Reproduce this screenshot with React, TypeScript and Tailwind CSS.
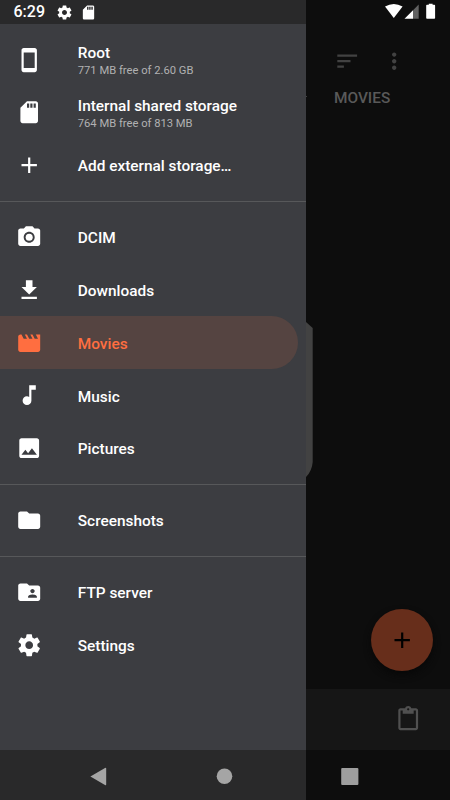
import React from "react";
import type { IconType } from "react-icons";
import {
  MdAdd,
  MdContentPaste,
  MdFileDownload,
  MdFolder,
  MdFolderShared,
  MdImage,
  MdMoreVert,
  MdMusicNote,
  MdPhotoCamera,
  MdSdStorage,
  MdSort,
  MdStayCurrentPortrait,
} from "react-icons/md";

type IconProps = { className?: string };
type Item = { icon: IconType | React.FC<IconProps>; label: string; detail?: string; active?: boolean };

function Gear({ className }: IconProps) {
  return (
    <svg viewBox="0 0 24 24" fill="currentColor" className={className}>
      <path d="M19.43 12.98c.04-.32.07-.64.07-.98s-.03-.66-.07-.98l2.11-1.65c.19-.15.24-.42.12-.64l-2-3.46c-.12-.22-.39-.3-.61-.22l-2.49 1c-.52-.4-1.08-.73-1.69-.98l-.38-2.65C14.46 2.18 14.25 2 14 2h-4c-.25 0-.46.18-.49.42l-.38 2.65c-.61.25-1.17.59-1.69.98l-2.49-1c-.23-.09-.49 0-.61.22l-2 3.46c-.13.22-.07.49.12.64l2.11 1.65c-.04.32-.07.65-.07.98s.03.66.07.98l-2.11 1.65c-.19.15-.24.42-.12.64l2 3.46c.12.22.39.3.61.22l2.49-1c.52.4 1.08.73 1.69.98l.38 2.65c.03.24.24.42.49.42h4c.25 0 .46-.18.49-.42l.38-2.65c.61-.25 1.17-.59 1.69-.98l2.49 1c.23.09.49 0 .61-.22l2-3.46c.12-.22.07-.49-.12-.64l-2.11-1.65zM12 15.5c-1.93 0-3.5-1.57-3.5-3.5s1.57-3.5 3.5-3.5 3.5 1.57 3.5 3.5-1.57 3.5-3.5 3.5z" />
    </svg>
  );
}

function Clapper({ className }: IconProps) {
  return (
    <svg viewBox="0 0 24 24" fill="currentColor" className={className}>
      <path d="M18 4l2 4h-3l-2-4h-2l2 4h-3l-2-4H8l2 4H7L5 4H4c-1.1 0-1.99.9-1.99 2L2 18c0 1.1.9 2 2 2h16c1.1 0 2-.9 2-2V4h-4z" />
    </svg>
  );
}

const groups: Item[][] = [
  [
    { icon: MdStayCurrentPortrait, label: "Root", detail: "771 MB free of 2.60 GB" },
    { icon: MdSdStorage, label: "Internal shared storage", detail: "764 MB free of 813 MB" },
    { icon: MdAdd, label: "Add external storage…" },
  ],
  [
    { icon: MdPhotoCamera, label: "DCIM" },
    { icon: MdFileDownload, label: "Downloads" },
    { icon: Clapper, label: "Movies", active: true },
    { icon: MdMusicNote, label: "Music" },
    { icon: MdImage, label: "Pictures" },
  ],
  [{ icon: MdFolder, label: "Screenshots" }],
  [
    { icon: MdFolderShared, label: "FTP server" },
    { icon: Gear, label: "Settings" },
  ],
];

function Row({ icon: Icon, label, detail, active }: Item) {
  return (
    <li
      className={`mr-[8.5px] flex h-[52.8px] items-center rounded-r-full pl-4 ${
        active ? "bg-[#554441] text-[#ff6e40]" : "text-white"
      }`}
    >
      <Icon className="size-[26.4px] shrink-0" />
      <div className="ml-[35.4px] whitespace-nowrap pt-[2.2px]">
        <div className={`text-[15.4px] font-medium ${detail ? "leading-[19px]" : "leading-[22px]"}`}>{label}</div>
        {detail && <div className="text-[11.2px] leading-[15px] text-[#b1b1b2]">{detail}</div>}
      </div>
    </li>
  );
}

function StatusBar() {
  return (
    <header className="flex h-6 shrink-0 text-white">
      <div className="flex w-[306px] items-center bg-[#29292a] pl-[13.5px]">
        <span className="w-[42.5px] text-[16px] font-medium leading-6">6:29</span>
        <Gear className="size-[17px]" />
        <MdSdStorage className="ml-[7px] size-[17px]" />
      </div>
      <svg className="h-6 flex-1" viewBox="306 0 144 24" preserveAspectRatio="none" fill="currentColor">
        <path d="M385 6.5Q393.8 1.5 402.6 6.5L393.8 18Z" />
        <path d="M404.5 18.8L413 10.2V18.8Z" />
        <path d="M413 10.2L418.7 4.5V18.8H413Z" fill="#626262" />
        <path d="M426.2 5.5Q426.2 4.7 427 4.7H428.8V3.7H432.6V4.7H434.3Q435.1 4.7 435.1 5.5V18Q435.1 18.8 434.3 18.8H427Q426.2 18.8 426.2 18Z" />
      </svg>
    </header>
  );
}

function Drawer() {
  return (
    <nav className="w-[306px] shrink-0 bg-[#3c3d41] pt-[9.4px]">
      {groups.map((group, i) => (
        <React.Fragment key={i}>
          {i > 0 && <hr className="my-[9px] h-px border-0 bg-[#57585a]" />}
          <ul>
            {group.map((item) => (
              <Row key={item.label} {...item} />
            ))}
          </ul>
        </React.Fragment>
      ))}
    </nav>
  );
}

function Content() {
  return (
    <main className="relative flex flex-1 flex-col bg-[#0d0d0d]">
      <div className="flex pl-[28px] pt-[23.5px] text-[#424242]">
        <MdSort className="size-[26.4px]" />
        <MdMoreVert className="ml-[20.4px] size-[26.4px]" />
      </div>
      <div className="pl-[28px] pt-[13.2px] text-[15.4px] font-medium leading-[22px] text-[#595959]">MOVIES</div>
      <svg className="absolute left-0 top-[298px] h-[155px] w-[8px]" viewBox="0 0 8 155">
        <path d="M0 0L6.7 6V140Q6 149 0 155Z" fill="#424242" />
      </svg>
      <span className="absolute left-0 top-[72px] h-px w-px bg-[#424242]" />
      <button
        aria-label="Add"
        className="absolute right-[16.8px] top-[585px] flex size-[62px] items-center justify-center rounded-full bg-[#672e1b] text-black shadow-[0_4px_7px_#080808]"
      >
        <MdAdd className="size-[26.4px]" />
      </button>
      <div className="mt-auto flex h-[61.5px] items-center justify-end bg-[#161616] pr-[29px] text-[#505050]">
        <MdContentPaste className="size-[26.4px]" />
      </div>
    </main>
  );
}

function NavigationBar() {
  return (
    <footer className="flex h-[50px] shrink-0 bg-[linear-gradient(to_right,#29292a_306px,#0d0d0d_306px)]">
      <svg className="h-[50px] w-full" viewBox="0 0 450 50" fill="#a5a5a5">
        <path d="M90.4 26.5L105 18Q106.2 17.5 106.2 18.8V34.2Q106.2 35.6 105 35Z" />
        <circle cx="224.5" cy="26.3" r="7.8" />
        <rect x="341.2" y="18" width="17.2" height="17" rx="1" fill="#9e9e9e" />
      </svg>
    </footer>
  );
}

export default function App() {
  return (
    <div className="flex h-[800px] w-[450px] flex-col overflow-hidden bg-[#0d0d0d] font-[Roboto,sans-serif]">
      <StatusBar />
      <div className="flex min-h-0 flex-1">
        <Drawer />
        <Content />
      </div>
      <NavigationBar />
    </div>
  );
}
